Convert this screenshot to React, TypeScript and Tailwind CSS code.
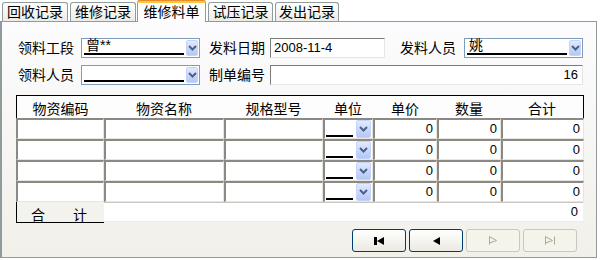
import React from "react";

const cols = ["w-[88px]", "w-[120px]", "w-[99px]", "w-[50px]", "w-[64px]", "w-[64px]", "w-[83px]"];
const heads = ["物资编码", "物资名称", "规格型号", "单位", "单价", "数量", "合计"];

function Chevron() {
  return (
    <svg width="9" height="6" viewBox="0 0 9 6">
      <path d="M1 1 L4.5 4.5 L8 1" fill="none" stroke="#4d6185" strokeWidth="2" />
    </svg>
  );
}

function DropBtn() {
  return (
    <div className="w-[15px] h-full flex items-center justify-center rounded-[2px] border border-[#c3d3fd] bg-linear-to-b from-[#e1eafe] to-[#b4c7f5]">
      <Chevron />
    </div>
  );
}

function Combo({ text, line }: { text: string; line: string }) {
  return (
    <div className="w-[119px] h-[20px] border border-[#7f9db9] bg-white flex p-[1px]">
      <div className="flex-1 flex items-end pr-[2px]">
        <div className={`${line} border-b-2 border-black leading-[15px] mb-[1px] pl-[2px] ml-[1px]`}>{text}&nbsp;</div>
      </div>
      <DropBtn />
    </div>
  );
}

function TextBox({ text, w, right }: { text: string; w: string; right?: boolean }) {
  return (
    <div
      className={`${w} h-[20px] bg-white border border-t-[#7b7b7b] border-l-[#7b7b7b] border-r-[#e6e6e6] border-b-[#e6e6e6] text-[13px] leading-[18px] px-[3px] ${right ? "text-right pr-[4px]" : ""}`}
    >
      {text}
    </div>
  );
}

function Tab({ label, w, ml }: { label: string; w: string; ml: string }) {
  return (
    <div className={`${w} ${ml} h-[19px] border border-b-0 border-[#919b9c] rounded-t-[3px] bg-linear-to-b from-white to-[#ecebe5] flex items-center justify-center pt-[1px]`}>
      {label}
    </div>
  );
}

function Cell({ w, children }: { w: string; children?: React.ReactNode }) {
  return (
    <div className={`${w} h-[21px] bg-white border-t-2 border-l-2 border-b border-r border-t-[#8a8983] border-l-[#8a8983] border-b-[#e7e5dd] border-r-[#e7e5dd] text-[13px] leading-[18px] text-right pr-[3px]`}>
      {children}
    </div>
  );
}

function UnitCell() {
  return (
    <div className="w-[50px] h-[21px] bg-white border-t-2 border-l-2 border-b border-r border-t-[#8a8983] border-l-[#8a8983] border-b-[#e7e5dd] border-r-[#e7e5dd] flex pr-[1px]">
      <div className="flex-1 flex items-end">
        <div className="w-[27px] ml-[1px] mb-[1px] border-b-2 border-black"></div>
      </div>
      <DropBtn />
    </div>
  );
}

function NavBtn({ disabled, children }: { disabled?: boolean; children: React.ReactNode }) {
  return (
    <div
      className={`w-[54px] h-[23px] rounded-[3px] border flex items-center justify-center ${
        disabled ? "border-[#cac8bb] bg-[#f5f4ea]" : "border-[#003c74] bg-linear-to-b from-white to-[#ebe9e0]"
      }`}
    >
      {children}
    </div>
  );
}

export default function App() {
  return (
    <div className="w-[600px] h-[260px] bg-white overflow-hidden text-black text-[14px] font-['Liberation_Sans','Noto_Sans_CJK_SC',sans-serif]">
      <div className="flex items-end h-[21px] pl-[2px] relative z-10">
        <Tab label="回收记录" w="w-[66px]" ml="ml-0" />
        <Tab label="维修记录" w="w-[66px]" ml="ml-[2px]" />
        <div className="w-[69px] ml-[1px] h-[22px] -mb-[1px] border-x border-[#919b9c] rounded-t-[3px] bg-[#fdfdfe] flex flex-col">
          <div className="h-[3px] -mx-[1px] rounded-t-[3px] border-t border-[#e68b2c] bg-[#ffc73c]"></div>
          <div className="flex-1 flex justify-center pt-[1px] leading-[16px]">维修料单</div>
        </div>
        <Tab label="试压记录" w="w-[65px]" ml="ml-[2px]" />
        <Tab label="发出记录" w="w-[64px]" ml="ml-[2px]" />
      </div>

      <div className="w-[597px] h-[237px] border border-l-2 border-[#919b9c] bg-linear-to-b from-[#fcfcfe] to-[#f1f0e9] pt-[16px]">
        <div className="flex h-[20px] items-center pl-[16px]">
          <div className="w-[63px] leading-[20px]">领料工段</div>
          <Combo text="曾**" line="w-[100px]" />
          <div className="w-[70px] pl-[9px] leading-[20px]">发料日期</div>
          <TextBox text="2008-11-4" w="w-[115px]" />
          <div className="w-[79px] pl-[15px] leading-[20px]">发料人员</div>
          <Combo text="姚" line="w-[100px]" />
        </div>
        <div className="flex h-[20px] items-center pl-[16px] mt-[7px]">
          <div className="w-[63px] leading-[20px]">领料人员</div>
          <Combo text="" line="w-[100px]" />
          <div className="w-[70px] pl-[9px] leading-[20px]">制单编号</div>
          <TextBox text="16" w="w-[313px]" right />
        </div>

        <div className="ml-[14px] mt-[10px] w-[568px]">
          <div className="flex h-[23px] border-t border-x border-black bg-[#fdfdfd]">
            {heads.map((h, i) => (
              <div
                key={h}
                className={`${i === 0 ? "w-[87px]" : i === 6 ? "w-[82px]" : cols[i]} flex items-center justify-center leading-[16px] pt-[3px]`}
              >
                {h}
              </div>
            ))}
          </div>
          {[0, 1, 2, 3].map((r) => (
            <div key={r} className="flex">
              <Cell w={cols[0]} />
              <Cell w={cols[1]} />
              <Cell w={cols[2]} />
              <UnitCell />
              <Cell w={cols[4]}>0</Cell>
              <Cell w={cols[5]}>0</Cell>
              <Cell w={cols[6]}>0</Cell>
            </div>
          ))}
          <div className="flex h-[21px]">
            <div className="w-[88px] border-l border-b border-black flex items-end pl-[14px] leading-[14px]">
              <span>合</span>
              <span className="ml-[28px]">计</span>
            </div>
            <div className="w-[479px] h-[20px] bg-white border-t border-t-[#c9c7c0] border-b border-b-[#eeede8] text-[13px] leading-[18px] text-right pr-[5px]">
              0
            </div>
          </div>
        </div>

        <div className="flex gap-[3px] ml-[350px] mt-[6px]">
          <NavBtn>
            <svg width="11" height="8" viewBox="0 0 11 8">
              <rect x="0" y="0" width="3" height="8" fill="#000" />
              <path d="M3 4 L10 0 L10 8 Z" fill="#000" />
            </svg>
          </NavBtn>
          <NavBtn>
            <svg width="7" height="8" viewBox="0 0 7 8">
              <path d="M0 4 L7 0 L7 8 Z" fill="#000" />
            </svg>
          </NavBtn>
          <NavBtn disabled>
            <svg width="9" height="9" viewBox="0 0 9 9">
              <path d="M0.5 0.5 V8.5 M0.5 0.5 L7.5 4.5 L0.5 7" fill="none" stroke="#aca899" strokeWidth="1" />
            </svg>
          </NavBtn>
          <NavBtn disabled>
            <svg width="11" height="9" viewBox="0 0 11 9">
              <path d="M0.5 0.5 V8.5 M0.5 0.5 L7.5 4.5 L0.5 7 M9.5 0.5 V8.5" fill="none" stroke="#aca899" strokeWidth="1" />
            </svg>
          </NavBtn>
        </div>
      </div>
    </div>
  );
}
